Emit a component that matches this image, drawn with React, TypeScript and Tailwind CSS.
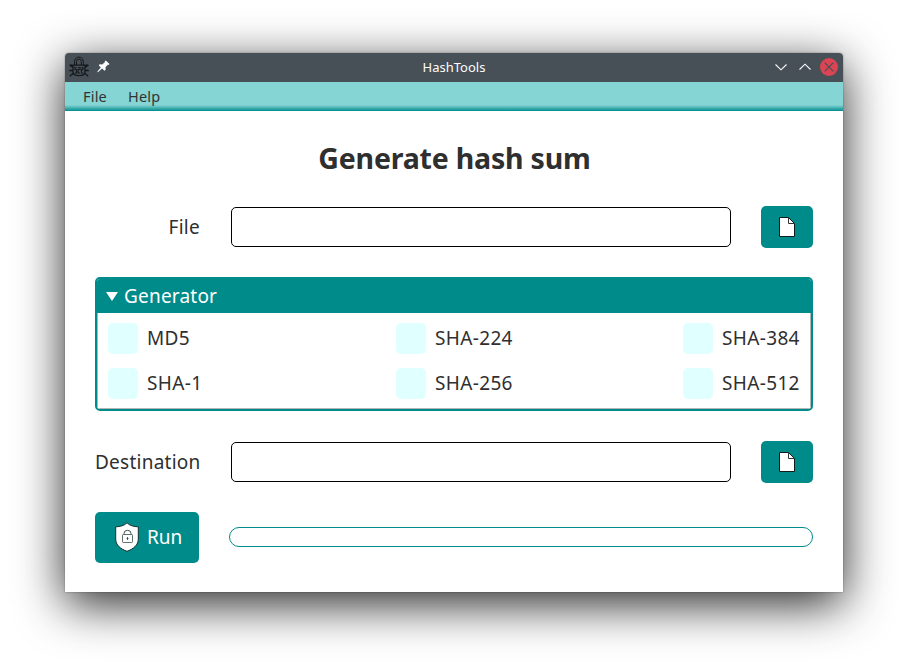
import React from "react";

function BugLockIcon() {
  return (
    <svg width="20" height="22" viewBox="0 0 20 22" fill="none" stroke="#15191c" strokeWidth="1.3">
      <path d="M5.500 9V5.500a4.400 4.400 0 0 1 8.800 0V9M7.500 9V5.500a2.400 2.400 0 0 1 4.800 0V9" strokeWidth="1" />
      <path d="M4 9.200h12v6.300c0 2.800-2.800 4.200-6 4.200s-6-1.400-6-4.200zM.5 9l3.500 2.500M19.500 9L16 11.500M.2 14.500H4M16 14.500h3.800M.8 20.300L4.500 17M19.200 20.300L15.500 17M1.500 8.500L4 10M18.500 8.500L16 10" />
      <path d="M7.500 11.500H6v2h1.500V17H6M12.500 11.500H14v2h-1.500V17H14M9 11.500h2v2H9V17h2" strokeWidth="1.1" />
    </svg>
  );
}

function PinIcon() {
  return (
    <svg width="13" height="13" viewBox="0 0 13 13" fill="#fcfcfc">
      <path d="M7.800 1.300L8.800 .4l3.700 3.600-.9.900-.8-.1-2.300 2.500.1 2.500-1.100.9-2.400-2.300L1.200 12 .4 12.200l.2-.9 3.200-3.900-2.100-2.100 1-1 2.500.2L7.900 2.200z" />
    </svg>
  );
}

function WindowControls() {
  return (
    <svg className="-mt-px" width="66" height="18" viewBox="0 0 66 18" fill="none">
      <path d="M3.500 6.500L9 11.800l5.500-5.300M27.500 11.500L33 6.200l5.500 5.300" stroke="#fcfcfc" strokeWidth="1.15" />
      <circle cx="57" cy="9" r="9" fill="#da4453" />
      <path d="M52.700 4.700l8.600 8.600M61.300 4.700l-8.600 8.600" stroke="#475057" strokeWidth="1.15" />
    </svg>
  );
}

function FileButton() {
  return (
    <button className="flex h-[42px] w-[52px] items-center justify-center rounded-[5px] bg-[#008b8b]">
      <svg width="16" height="20" viewBox="0 0 16 20">
        <path d="M.5.500h9l6 6v13H.5z" fill="#fff" stroke="#101c1c" />
        <path d="M9.500.500v6h6" fill="none" stroke="#333" strokeWidth="1" />
      </svg>
    </button>
  );
}

function ShieldIcon() {
  return (
    <svg className="-mt-px" width="24" height="30" viewBox="0 0 24 30">
      <path d="M12 .800C9.500 3.600 5 4.700.700 4.800V17c0 6 4.800 10 11.300 12.300C18.500 27 23.300 23 23.300 17V4.800C19 4.700 14.500 3.600 12 .800z" fill="#fff" stroke="#12302f" strokeWidth="1" />
      <rect x="7.500" y="12.500" width="10" height="8" rx=".7" fill="none" stroke="#60706f" />
      <path d="M9 12.500v-1a3.500 3.200 0 0 1 7 0v1" fill="none" stroke="#405552" />
      <path d="M12.500 15v3M11.500 16.500h2" stroke="#405552" strokeWidth=".9" />
    </svg>
  );
}

function FileRow({ label }: { label: string }) {
  return (
    <div className="flex h-[42px] items-center">
      <label className="w-[105px] whitespace-nowrap text-right text-[19px] tracking-[0.25px]">{label}</label>
      <input className="ml-[31px] h-10 w-[500px] rounded-[5px] border border-black bg-white px-2 outline-none" />
      <div className="ml-[30px]">
        <FileButton />
      </div>
    </div>
  );
}

function HashOption({ label }: { label: string }) {
  return (
    <label className="flex h-[31px] items-center whitespace-nowrap text-[19px] leading-[29px] tracking-[0.35px]">
      <span className="mr-[9px] h-[31px] w-[30px] rounded-[5px] bg-[#e0ffff]" />
      <span>{label}</span>
    </label>
  );
}

export default function App() {
  return (
    <div className="h-[669px] w-[908px] overflow-hidden bg-white px-[65px] pt-[53px] font-['Noto_Sans',sans-serif] text-[#2f2f2f]">
      <div className="h-[539px] w-[778px] rounded-t bg-white shadow-[0_12px_48px_rgba(0,0,0,0.85),0_0_2px_rgba(0,0,0,0.4)]">
        <header className="flex h-[29px] items-center rounded-t bg-[#475057] pl-1 pr-[5px]">
          <span className="-mt-0.5 flex"><BugLockIcon /></span>
          <span className="-mt-0.5 ml-2 flex"><PinIcon /></span>
          <span className="flex-1 pl-[26px] text-center text-[13px] leading-[27px] text-[#fcfcfc]">HashTools</span>
          <WindowControls />
        </header>
        <nav className="flex h-[29px] gap-[21px] bg-[linear-gradient(to_bottom,#85d5d4_0px,#85d5d4_23px,#008b8b_29px)] pl-[18px] text-[14.5px] leading-[29px] tracking-[0.2px] text-[#333]">
          <span>File</span>
          <span>Help</span>
        </nav>
        <main className="flex flex-col px-[30px]">
          <h1 className="mt-[26px] h-[42px] whitespace-nowrap pl-px text-center text-[28.5px] font-bold leading-[42px] tracking-[-0.2px]">Generate hash sum</h1>
          <div className="mt-[27px]"><FileRow label="File" /></div>
          <section className="mt-[29px] h-[134px] overflow-hidden rounded-[5px] border-2 border-[#008b8b]">
            <div className="flex h-[34px] items-center bg-[#008b8b] pl-[9px] text-[19px] tracking-[0.2px] text-white">
              <svg width="12" height="9" viewBox="0 0 12 9" fill="#fff"><path d="M0 0h12L6 9z" /></svg>
              <span className="ml-1.5">Generator</span>
            </div>
            <div className="grid h-24 grid-cols-[288px_287px_auto] content-start gap-y-[14px] border-x border-b border-[#b5b5b5] pl-[10px] pt-[10px]">
              <HashOption label="MD5" />
              <HashOption label="SHA-224" />
              <HashOption label="SHA-384" />
              <HashOption label="SHA-1" />
              <HashOption label="SHA-256" />
              <HashOption label="SHA-512" />
            </div>
          </section>
          <div className="mt-[30px]"><FileRow label="Destination" /></div>
          <div className="mt-[29px] flex h-[51px] items-center">
            <button className="flex h-[51px] w-[104px] items-center rounded-[5px] bg-[#008b8b] pl-5 text-[19px] leading-[29px] text-white">
              <ShieldIcon />
              <span className="ml-2">Run</span>
            </button>
            <div className="-mt-px ml-[30px] h-5 w-[584px] rounded-full border border-[#008b8b]" />
          </div>
        </main>
      </div>
    </div>
  );
}
